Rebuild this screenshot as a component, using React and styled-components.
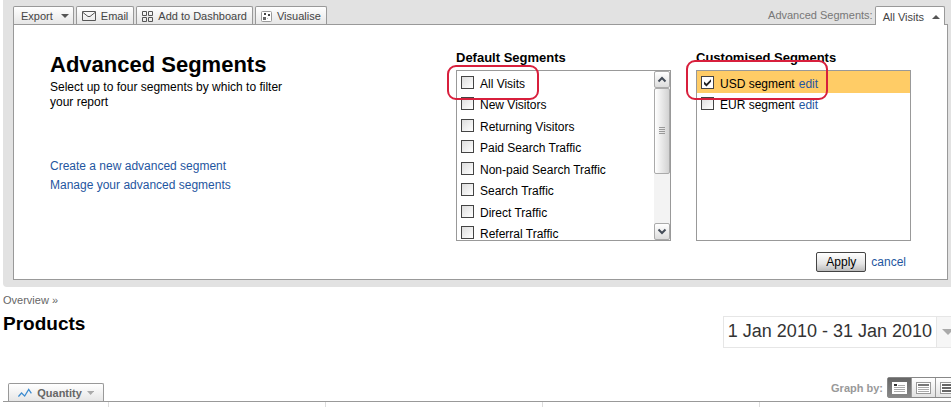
import React, { useRef, useState } from 'react';
import styled, { createGlobalStyle, css } from 'styled-components';

const GlobalStyle = createGlobalStyle`
	* {
		box-sizing: border-box;
	}

	body {
		margin: 0;
		background: #fff;
		color: #000;
		font-family: 'Liberation Sans', Arial, sans-serif;
		font-size: 12px;
		line-height: 14px;
		overflow-x: hidden;
	}

	button {
		font-family: inherit;
		font-size: inherit;
		line-height: inherit;
		cursor: pointer;
	}

	a {
		color: #1f56a0;
		text-decoration: none;
	}
`;

const Page = styled.div`
	padding-left: 3px;
	overflow: hidden;
`;

const Header = styled.header`
	background: #e2e2e2;
	padding: 6px 3px 7px 10px;
	border-bottom-left-radius: 4px;
`;

const Toolbar = styled.div`
	display: flex;
	justify-content: space-between;
	padding-right: 3px;
	font-size: 11px;
`;

const TabGroup = styled.div`
	display: flex;
	align-items: center;
	gap: 2px;
	color: #777;
`;

const Tab = styled.button`
	display: flex;
	align-items: center;
	gap: ${({ $menu }) => ($menu ? '8px' : '5px')};
	height: 18px;
	padding: 1px ${({ $menu }) => ($menu ? '4px 0 7px' : '5px 0 5px')};
	border: 1px solid #999;
	border-bottom: 0;
	border-radius: 2px 2px 0 0;
	background: linear-gradient(#fff, #e6e6e6);
	color: #444;
	white-space: nowrap;

	${({ $open }) =>
		$open &&
		css`
			height: 19px;
			margin-bottom: -1px;
			background: #fff;
			z-index: 1;
		`}
`;

const Panel = styled.section`
	display: flex;
	justify-content: space-between;
	background: #fff;
	border: 1px solid #999;
	height: 256px;
	padding: 25px 36px 0;
`;

const Intro = styled.div`
	width: 250px;

	h1 {
		margin: 2px 0 3px;
		font-size: 22px;
		line-height: 25px;
		white-space: nowrap;
	}

	p {
		margin: 0 0 47px;
		line-height: 15px;
	}

	a {
		display: block;
		line-height: 19px;
	}
`;

const Chooser = styled.div`
	display: flex;
	flex-direction: column;
	align-items: flex-end;
	gap: 11px;
`;

const Columns = styled.div`
	display: flex;
	gap: 25px;
`;

const Column = styled.div`
	width: 215px;

	h2 {
		margin: 0 0 4px;
		font-size: 13px;
		line-height: 16px;
	}
`;

const ListBox = styled.div`
	position: relative;
	display: flex;
	height: 171px;
	border: 1px solid #999;
`;

const Options = styled.ul`
	flex: 1;
	margin: 0;
	padding: 0;
	list-style: none;
	overflow: hidden;
`;

const Option = styled.li`
	display: flex;
	align-items: center;
	gap: 4px;
	height: 22px;
	padding-left: 4px;
	background: ${({ $selected }) => ($selected ? '#ffcc66' : 'transparent')};

	&:nth-child(even) {
		height: 21px;
	}

	label {
		display: flex;
		align-items: center;
		gap: 6px;
	}

	span,
	a {
		padding-top: 3px;
	}
`;

const Checkbox = styled.input`
	appearance: none;
	width: 13px;
	height: 13px;
	margin: 0;
	border: 1px solid #444;
	background: linear-gradient(135deg, #ddd, #fff);

	&:checked {
		background: url("data:image/svg+xml,%3Csvg xmlns='http://www.w3.org/2000/svg' viewBox='0 0 11 11'%3E%3Cpath d='M2 4.5v2.7l2.5 2.3L9 4.8V2.2L4.5 6.7z' fill='%23222'/%3E%3C/svg%3E"), #fff;
	}
`;

/* hand-drawn outline round the option being pointed out */
const Highlight = styled.div`
	position: absolute;
	left: ${({ $tall }) => ($tall ? '-11px' : '-10px')};
	top: ${({ $tall }) => ($tall ? '-11px' : '-6px')};
	width: ${({ $tall }) => ($tall ? '142px' : '92px')};
	height: ${({ $tall }) => ($tall ? '40px' : '35px')};
	border: 2px solid #d81f3c;
	border-radius: 9px;
	pointer-events: none;
`;

const ScrollBar = styled.div`
	display: flex;
	flex-direction: column;
	justify-content: space-between;
	width: 16px;
	background: #f3f3f3;
`;

const ScrollButton = styled.button`
	display: flex;
	align-items: center;
	justify-content: center;
	height: 17px;
	padding: 0;
	border: 1px solid #aaa;
	border-radius: 2px;
	background: linear-gradient(#fff, #ddd);
`;

const ScrollThumb = styled.div`
	display: flex;
	align-items: center;
	justify-content: center;
	height: 86px;
	margin-bottom: auto;
	border: 1px solid #aaa;
	border-radius: 2px;
	background: linear-gradient(90deg, #fff, #d2d2d2);
`;

const Actions = styled.div`
	display: flex;
	align-items: center;
	gap: 5px;
	padding-right: 5px;
`;

const ApplyButton = styled.button`
	width: 50px;
	height: 20px;
	padding: 0;
	border: 1px solid #444;
	border-radius: 2px;
	background: linear-gradient(#fff, #e4e4e4 60%, #bbb);
`;

const Heading = styled.div`
	display: flex;
	justify-content: space-between;
	align-items: flex-start;
	margin-right: -8px;
	padding-top: 6px;
`;

const Title = styled.div`
	a {
		color: #666;
		font-size: 11px;
	}

	h2 {
		margin: 6px 0 0;
		font-size: 19px;
		line-height: 22px;
	}
`;

const DatePicker = styled.button`
	display: flex;
	margin-top: 23px;
	padding: 0;
	border: 1px solid #e6e6e6;
	background: #fff;
	color: #333;
	font-size: 18px;
	line-height: 28px;

	span {
		padding: 0 4px;
	}
`;

const DateArrow = styled.i`
	display: flex;
	align-items: center;
	justify-content: center;
	width: 22px;
	height: 30px;
	border-left: 1px solid #e6e6e6;
	background: #f6f6f6;
`;

const GraphBar = styled.div`
	display: flex;
	justify-content: space-between;
	align-items: flex-end;
	height: 53px;
	margin-right: -10px;
	padding-left: 5px;
	font-size: 11px;
	font-weight: bold;
`;

const QuantityTab = styled(Tab)`
	width: 96px;
	padding: 0 9px;
	color: #666;
	font-weight: bold;
`;

const GraphBy = styled.div`
	display: flex;
	align-items: center;
	gap: 4px;
	margin-bottom: 3px;
	color: #999;
`;

const ViewButtons = styled.div`
	display: flex;
	border: 1px solid #888;
	border-radius: 2px;
`;

const ViewButton = styled.button`
	display: flex;
	align-items: center;
	justify-content: center;
	width: 24px;
	height: 19px;
	padding: 0;
	border: 0;
	border-right: 1px solid #999;
	background: ${({ $active }) =>
		$active ? 'linear-gradient(#666, #888)' : 'linear-gradient(#fff, #e2e2e2)'};
`;

const GraphGrid = styled.div`
	display: grid;
	grid-template-columns: 106px repeat(4, 217px);
	height: 6px;
	border-top: 1px solid #999;

	div {
		border-right: 1px solid #ddd;
	}
`;

const Arrow = ({ up, width = 8, height = 4, color = '#555' }) => (
	<svg width={width} height={height} viewBox="0 0 8 4" preserveAspectRatio="none">
		<path d={up ? 'M0 4h8L4 0z' : 'M0 0h8L4 4z'} fill={color} />
	</svg>
);

const Chevron = ({ up }) => (
	<svg width="10" height="7" viewBox="0 0 10 7">
		<path
			d={up ? 'M1.5 5.5L5 2l3.5 3.5' : 'M1.5 1.5L5 5l3.5-3.5'}
			fill="none"
			stroke="#444c58"
			strokeWidth="2"
		/>
	</svg>
);

const EmailIcon = () => (
	<svg width="14" height="10" viewBox="0 0 14 10" fill="none" stroke="#555">
		<path d="M.5.5h13v9H.5zM1 1.5l5 4h2l5-4" />
	</svg>
);

const DashboardIcon = () => (
	<svg width="11" height="11" viewBox="0 0 11 11" fill="none" stroke="#555">
		<path d="M.5.5h4v4h-4zM6.5.5h4v4h-4zM.5 6.5h4v4h-4zM6.5 6.5h4v4h-4z" />
	</svg>
);

const VisualiseIcon = () => (
	<svg width="11" height="11" viewBox="0 0 11 11">
		<rect x=".5" y=".5" width="10" height="10" rx="1" fill="#fff" stroke="#999" />
		<path d="M3 2h2v2H3zM7 3h2v2H7z" fill="#444" />
		<path d="M2 6h3v3H2z" fill="#666" />
		<path d="M6 7h1v1H6z" fill="#bbb" />
	</svg>
);

const LineIcon = () => (
	<svg width="16" height="10" viewBox="0 0 16 10" fill="none" stroke="#3b8bd0">
		<path d="M.5 9l3.5-4L7.5 8.5 12 1l3 4.5" strokeWidth="1.4" />
	</svg>
);

const ViewIcon = ({ type }) => (
	<svg width="15" height="12" viewBox="0 0 15 12">
		<rect
			x=".5"
			y=".5"
			width="14"
			height="11"
			fill="#fff"
			stroke={type === 'day' ? '#fff' : '#999'}
		/>
		{type === 'day' && (
			<>
				<path d="M2 2h3v2H2z" fill="#333" />
				<path d="M6 3.5h7M2 5.5h11M2 7.5h11M2 9.5h11" stroke="#aaa" />
			</>
		)}
		{type === 'week' && (
			<>
				<path d="M2 2h11v2H2z" fill="#777" />
				<path d="M2 5.5h11M2 7.5h11M2 9.5h11" stroke="#aaa" />
			</>
		)}
		{type === 'month' && <path d="M2 2h11v2H2zM2 5h11v2H2zM2 8h11v2H2z" fill="#666" />}
	</svg>
);

const defaultSegments = [
	'All Visits',
	'New Visitors',
	'Returning Visitors',
	'Paid Search Traffic',
	'Non-paid Search Traffic',
	'Search Traffic',
	'Direct Traffic',
	'Referral Traffic',
];

const customSegments = ['USD segment', 'EUR segment'];

const SegmentOption = ({ name, checked, onToggle, editable }) => (
	<Option $selected={checked}>
		<label>
			<Checkbox type="checkbox" checked={checked} onChange={() => onToggle(name)} />
			<span>{name}</span>
		</label>
		{editable && <a href="#/edit">edit</a>}
	</Option>
);

const App = () => {
	const [selected, setSelected] = useState(['USD segment']);
	const [view, setView] = useState('day');
	const list = useRef(null);

	const toggle = (name) => {
		setSelected(
			selected.includes(name)
				? selected.filter((item) => item !== name)
				: [...selected, name]
		);
	};

	const scroll = (amount) => list.current.scrollBy(0, amount);

	return (
		<Page>
			<GlobalStyle />
			<Header>
				<Toolbar>
					<TabGroup>
						<Tab $menu>
							Export <Arrow />
						</Tab>
						<Tab>
							<EmailIcon /> Email
						</Tab>
						<Tab>
							<DashboardIcon /> Add to Dashboard
						</Tab>
						<Tab>
							<VisualiseIcon /> Visualise
						</Tab>
					</TabGroup>
					<TabGroup>
						Advanced Segments:
						<Tab $menu $open>
							All Visits <Arrow up />
						</Tab>
					</TabGroup>
				</Toolbar>
				<Panel>
					<Intro>
						<h1>Advanced Segments</h1>
						<p>Select up to four segments by which to filter your report</p>
						<a href="#/create">Create a new advanced segment</a>
						<a href="#/manage">Manage your advanced segments</a>
					</Intro>
					<Chooser>
						<Columns>
							<Column>
								<h2>Default Segments</h2>
								<ListBox>
									<Options ref={list}>
										{defaultSegments.map((name) => (
											<SegmentOption
												key={name}
												name={name}
												checked={selected.includes(name)}
												onToggle={toggle}
											/>
										))}
									</Options>
									<ScrollBar>
										<ScrollButton aria-label="Scroll up" onClick={() => scroll(-21)}>
											<Chevron up />
										</ScrollButton>
										<ScrollThumb>
											<svg width="6" height="8" viewBox="0 0 6 8" stroke="#999">
												<path d="M0 .5h6M0 2.5h6M0 4.5h6M0 6.5h6" />
											</svg>
										</ScrollThumb>
										<ScrollButton aria-label="Scroll down" onClick={() => scroll(21)}>
											<Chevron />
										</ScrollButton>
									</ScrollBar>
									<Highlight />
								</ListBox>
							</Column>
							<Column>
								<h2>Customised Segments</h2>
								<ListBox>
									<Options>
										{customSegments.map((name) => (
											<SegmentOption
												key={name}
												name={name}
												checked={selected.includes(name)}
												onToggle={toggle}
												editable
											/>
										))}
									</Options>
									<Highlight $tall />
								</ListBox>
							</Column>
						</Columns>
						<Actions>
							<ApplyButton>Apply</ApplyButton>
							<a href="#/cancel">cancel</a>
						</Actions>
					</Chooser>
				</Panel>
			</Header>
			<Heading>
				<Title>
					<a href="#/overview">Overview »</a>
					<h2>Products</h2>
				</Title>
				<DatePicker>
					<span>1 Jan 2010 - 31 Jan 2010</span>
					<DateArrow>
						<Arrow width={12} height={6} color="#aaa" />
					</DateArrow>
				</DatePicker>
			</Heading>
			<GraphBar>
				<QuantityTab>
					<LineIcon /> Quantity <Arrow color="#aaa" />
				</QuantityTab>
				<GraphBy>
					Graph by:
					<ViewButtons>
						{['day', 'week', 'month'].map((type) => (
							<ViewButton
								key={type}
								aria-label={type}
								$active={view === type}
								onClick={() => setView(type)}
							>
								<ViewIcon type={type} />
							</ViewButton>
						))}
					</ViewButtons>
				</GraphBy>
			</GraphBar>
			<GraphGrid>
				<div />
				<div />
				<div />
				<div />
			</GraphGrid>
		</Page>
	);
};

export default App;
